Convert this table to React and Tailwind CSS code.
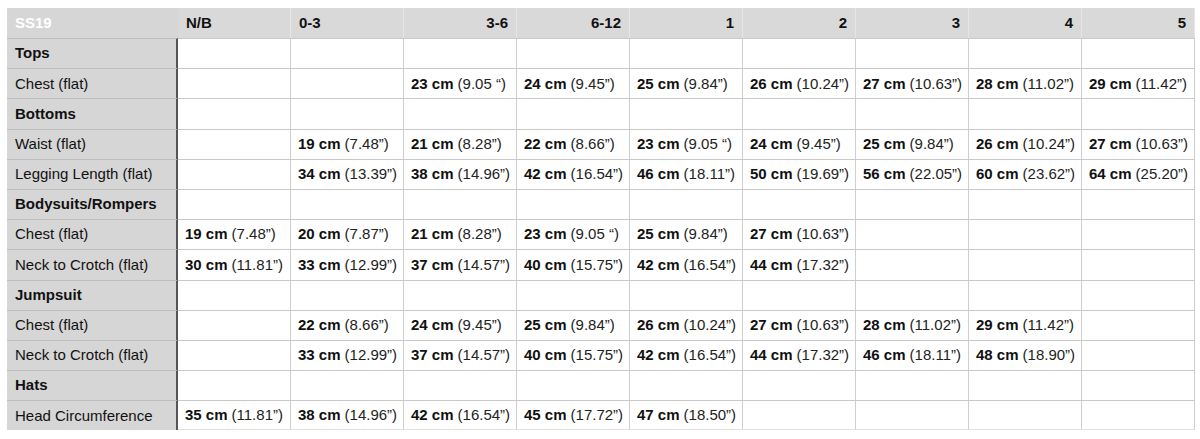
const cols = ["N/B", "0-3", "3-6", "6-12", "1", "2", "3", "4", "5"];

// each entry: [cm, inches] or null for an empty cell
const rows = [
  { label: "Tops", section: true },
  {
    label: "Chest (flat)",
    cells: [null, null, ["23", "9.05 \u201c"], ["24", "9.45\u201d"], ["25", "9.84\u201d"], ["26", "10.24\u201d"], ["27", "10.63\u201d"], ["28", "11.02\u201d"], ["29", "11.42\u201d"]],
  },
  { label: "Bottoms", section: true },
  {
    label: "Waist (flat)",
    cells: [null, ["19", "7.48\u201d"], ["21", "8.28\u201d"], ["22", "8.66\u201d"], ["23", "9.05 \u201c"], ["24", "9.45\u201d"], ["25", "9.84\u201d"], ["26", "10.24\u201d"], ["27", "10.63\u201d"]],
  },
  {
    label: "Legging Length (flat)",
    cells: [null, ["34", "13.39\u201d"], ["38", "14.96\u201d"], ["42", "16.54\u201d"], ["46", "18.11\u201d"], ["50", "19.69\u201d"], ["56", "22.05\u201d"], ["60", "23.62\u201d"], ["64", "25.20\u201d"]],
  },
  { label: "Bodysuits/Rompers", section: true },
  {
    label: "Chest (flat)",
    cells: [["19", "7.48\u201d"], ["20", "7.87\u201d"], ["21", "8.28\u201d"], ["23", "9.05 \u201c"], ["25", "9.84\u201d"], ["27", "10.63\u201d"], null, null, null],
  },
  {
    label: "Neck to Crotch (flat)",
    cells: [["30", "11.81\u201d"], ["33", "12.99\u201d"], ["37", "14.57\u201d"], ["40", "15.75\u201d"], ["42", "16.54\u201d"], ["44", "17.32\u201d"], null, null, null],
  },
  { label: "Jumpsuit", section: true },
  {
    label: "Chest (flat)",
    cells: [null, ["22", "8.66\u201d"], ["24", "9.45\u201d"], ["25", "9.84\u201d"], ["26", "10.24\u201d"], ["27", "10.63\u201d"], ["28", "11.02\u201d"], ["29", "11.42\u201d"], null],
  },
  {
    label: "Neck to Crotch (flat)",
    cells: [null, ["33", "12.99\u201d"], ["37", "14.57\u201d"], ["40", "15.75\u201d"], ["42", "16.54\u201d"], ["44", "17.32\u201d"], ["46", "18.11\u201d"], ["48", "18.90\u201d"], null],
  },
  { label: "Hats", section: true },
  {
    label: "Head Circumference",
    cells: [["35", "11.81\u201d"], ["38", "14.96\u201d"], ["42", "16.54\u201d"], ["45", "17.72\u201d"], ["47", "18.50\u201d"], null, null, null, null],
  },
];

export default function App() {
  return (
    <div className="w-[1200px] h-[439px] bg-white pt-[8px] pl-[7px] font-['Liberation_Sans',Arial,sans-serif] text-[15px] text-[#111] overflow-hidden">
      <div className="grid grid-cols-[171px_repeat(9,113px)] w-fit">
        {/* Header */}
        <div className="h-[30px] bg-[#d6d6d6] flex items-center px-[8px] font-bold text-white border-r border-[#d6d6d6]">
          SS19
        </div>
        {cols.map((c, i) => (
          <div
            key={c}
            className={`h-[30px] bg-[#d9d9d9] flex items-center px-[8px] font-bold border-r border-[#e6e6e6] ${
              i < 2 ? "justify-start" : "justify-end"
            }`}
          >
            {c}
          </div>
        ))}

        {rows.map((row, r) => (
          <Row key={r} row={row} last={r === rows.length - 1} />
        ))}
      </div>
    </div>
  );
}

function Row({ row, last }) {
  const cells = row.cells || Array(9).fill(null);
  return (
    <>
      <div
        className={`h-[30.2px] bg-[#d6d6d6] flex items-center px-[8px] border-r-2 border-r-[#555] border-t border-t-[#bdbdbd] ${
          row.section ? "font-bold" : ""
        }`}
      >
        {row.label}
      </div>
      {cells.map((cell, i) => (
        <div
          key={i}
          className={`h-[30.2px] flex items-center px-[7px] whitespace-nowrap border-t border-t-[#c9c9c9] border-r border-r-[#cfcfcf] ${
            last ? "border-b border-b-[#e2e2e2]" : ""
          }`}
        >
          {cell && (
            <>
              <span className="font-bold">{cell[0]} cm</span>
              <span className="ml-[4px] text-[#222]">({cell[1]})</span>
            </>
          )}
        </div>
      ))}
    </>
  );
}
